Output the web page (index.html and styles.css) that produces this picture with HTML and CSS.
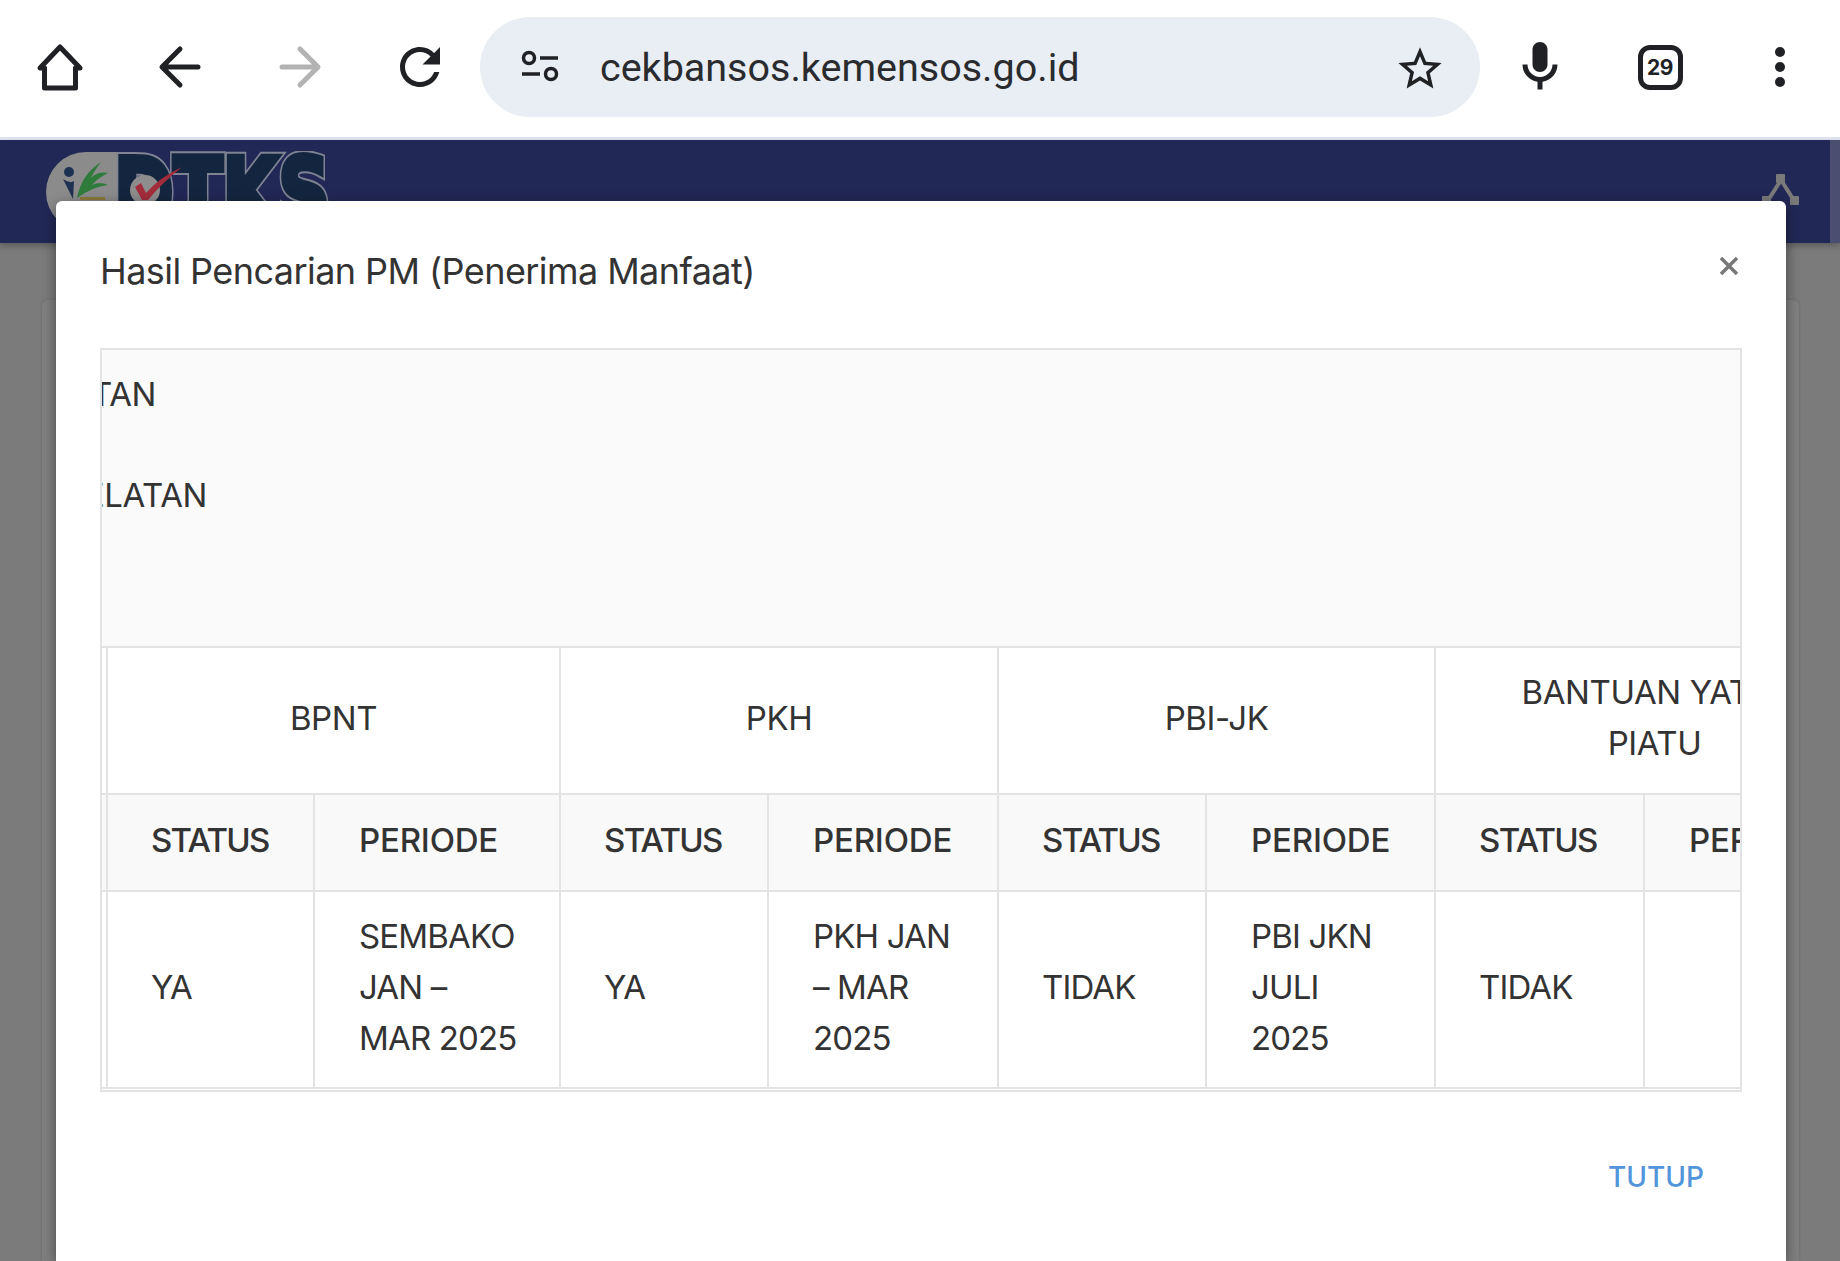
FILE: index.html
```html
<!DOCTYPE html>
<html lang="id">
<head>
<meta charset="utf-8">
<title>Cek Bansos</title>
<link rel="stylesheet" href="styles.css">
</head>
<body>
<header class="toolbar">
  <div class="tool-btn"><svg class="ico" viewBox="0 0 60 60"><path class="st5" d="M30 10 L10 31 H14.500 V51 H45.500 V31 H50 Z"/></svg></div>
  <div class="tool-btn"><svg class="ico" viewBox="0 0 60 60"><path class="st5" d="M48 30 H13 M30 12 L12 30 L30 48"/></svg></div>
  <div class="tool-btn"><svg class="ico" viewBox="0 0 60 60"><path class="st5 off" d="M12 30 H47 M30 12 L48 30 L30 48"/></svg></div>
  <div class="tool-btn"><svg class="ico" viewBox="0 0 24 24"><path class="fill" d="M17.65 6.350C16.200 4.900 14.210 4 12 4c-4.420 0-7.990 3.580-7.990 8s3.570 8 7.990 8c3.730 0 6.840-2.550 7.730-6h-2.080c-.820 2.330-3.040 4-5.650 4-3.310 0-6-2.690-6-6s2.690-6 6-6c1.660 0 3.140.690 4.220 1.780L13 11h7V4l-2.350 2.350z"/></svg></div>
  <div class="urlbar">
    <svg class="tune" viewBox="0 0 44 36"><g class="st35"><circle cx="9" cy="9" r="5.500"/><path d="M20 9H38M2 25H20"/><circle cx="31" cy="25" r="5.500"/></g></svg>
    <span class="url">cekbansos.kemensos.go.id</span>
    <svg class="star" viewBox="0 0 24 24"><path class="fill" d="M22 9.240l-7.190-.620L12 2 9.190 8.630 2 9.240l5.460 4.730L5.820 21 12 17.270 18.180 21l-1.630-7.030L22 9.240zM12 15.400l-3.760 2.270 1-4.280-3.320-2.880 4.380-.380L12 6.100l1.710 4.040 4.380.380-3.320 2.880 1 4.280L12 15.400z"/></svg>
  </div>
  <div class="tool-btn"><svg class="ico" viewBox="0 0 24 24"><path class="fill" d="M12 14c1.660 0 3-1.340 3-3V5c0-1.660-1.340-3-3-3S9 3.340 9 5v6c0 1.660 1.340 3 3 3zm5-3c0 2.760-2.240 5-5 5s-5-2.240-5-5H5c0 3.530 2.610 6.430 6 6.920V21h2v-3.080c3.390-.490 6-3.390 6-6.920h-2z"/></svg></div>
  <div class="tool-btn"><span class="tabs">29</span></div>
  <div class="tool-btn"><svg class="ico" viewBox="0 0 60 60"><circle class="fill" cx="30" cy="15" r="5"/><circle class="fill" cx="30" cy="30" r="5"/><circle class="fill" cx="30" cy="45" r="5"/></svg></div>
</header>

<div class="site-head">
  <svg class="logo" viewBox="0 0 300 90">
    <path class="logo-pill" d="M78 1H42A40 40 0 0 0 42 81H78Z"/>
    <circle class="logo-head" cx="25" cy="21" r="5"/>
    <path class="logo-body" d="M19 28 Q26 33 30 30 L29 48 Z"/>
    <path class="logo-leaf" d="M33 47 Q37 24 57 11 Q50 20 47 27 Q54 20 64 22 Q54 27 48 34 Q56 30 64 34 Q48 36 33 47 Z"/>
    <path class="logo-dots" d="M36 46h25v3H36z"/>
    <use class="logo-outline" href="#dtks"/>
    <text id="dtks" class="logo-text" x="70" y="76" textLength="216" lengthAdjust="spacingAndGlyphs">DTKS</text>
    <circle class="logo-ring" cx="101" cy="39" r="15"/>
    <path class="logo-tick" d="M91 36 L97 32 L102 42 Q116 26 138 16 Q118 32 104 49 L98 49 Z"/>
  </svg>
  <svg class="net" viewBox="0 0 40 40"><path class="net-line" d="M20 8 L6 30 M20 8 L34 30"/><rect class="net-node" x="15" y="2" width="9" height="9" rx="1"/><rect class="net-node" x="1" y="24" width="9" height="9" rx="1"/><rect class="net-node" x="29" y="24" width="9" height="9" rx="1"/></svg>
</div>

<main class="page-body"><div class="page-card"></div></main>

<section class="modal">
  <div class="modal-head">
    <h4 class="modal-title">Hasil Pencarian PM (Penerima Manfaat)</h4>
    <svg class="close" viewBox="0 0 20 20"><path d="M2 2 L18 18 M18 2 L2 18"/></svg>
  </div>
  <div class="scroller">
    <div class="details">
      <div class="line line-a"><span>TAN</span></div>
      <div class="line line-b"><span>ELATAN</span></div>
    </div>
    <table class="grid">
      <colgroup>
        <col class="c-lead"><col class="c-a"><col class="c-b"><col class="c-c"><col class="c-d"><col class="c-c"><col class="c-e"><col class="c-g"><col class="c-f">
      </colgroup>
      <thead>
        <tr class="head-top">
          <th></th>
          <th colspan="2">BPNT</th>
          <th colspan="2">PKH</th>
          <th colspan="2">PBI-JK</th>
          <th colspan="2">BANTUAN YATIM<br>PIATU</th>
        </tr>
        <tr class="head-sub">
          <th></th>
          <th class="status">STATUS</th><th>PERIODE</th>
          <th class="status">STATUS</th><th>PERIODE</th>
          <th class="status">STATUS</th><th>PERIODE</th>
          <th class="status">STATUS</th><th>PERIODE</th>
        </tr>
      </thead>
      <tbody>
        <tr>
          <td></td>
          <td>YA</td><td>SEMBAKO<br>JAN –<br>MAR 2025</td>
          <td>YA</td><td>PKH JAN<br>– MAR<br>2025</td>
          <td>TIDAK</td><td>PBI JKN<br>JULI<br>2025</td>
          <td>TIDAK</td><td></td>
        </tr>
      </tbody>
    </table>
  </div>
  <div class="modal-foot"><span class="btn-close">TUTUP</span></div>
</section>
</body>
</html>
```

FILE: styles.css
```css
* { box-sizing: border-box; }
html, body { margin: 0; height: 1261px; overflow: hidden; }
body {
  position: relative;
  display: flex;
  flex-direction: column;
  background: #7b7b7b;
  font-family: Inter, "Noto Sans", sans-serif;
  color: #333;
}

/* browser toolbar */
.toolbar {
  height: 140px;
  flex: none;
  display: flex;
  align-items: flex-start;
  background: #fff;
  border-bottom: 3px solid #dfe5f0;
}
.tool-btn {
  width: 120px;
  height: 134px;
  flex: none;
  display: flex;
  align-items: center;
  justify-content: center;
}
.ico { width: 60px; height: 60px; }
.fill { fill: #202124; }
.st5 { fill: none; stroke: #202124; stroke-width: 5; stroke-linecap: round; stroke-linejoin: round; }
.st5.off { stroke: #b3b3b3; }
.st35 { fill: none; stroke: #202124; stroke-width: 3.5; }
.urlbar {
  width: 1000px;
  height: 100px;
  margin-top: 17px;
  flex: none;
  display: flex;
  align-items: center;
  padding-left: 40px;
  background: #e9eef5;
  border-radius: 50px;
}
.tune { width: 44px; height: 36px; flex: none; }
.url {
  margin: 0 0 0 36px;
  font-family: Roboto, sans-serif;
  font-size: 39.500px;
  color: #2a2b2e;
  white-space: nowrap;
}
.star { width: 52px; height: 52px; margin-left: auto; margin-right: 34px; margin-top: 4px; }
.tabs {
  width: 45px;
  height: 45px;
  display: flex;
  align-items: center;
  justify-content: center;
  border: 5px solid #202124;
  border-radius: 12px;
  font-size: 21px;
  font-weight: 700;
  letter-spacing: -.5px;
  color: #202124;
}

/* site under the dialog, dimmed */
.site-head {
  position: relative;
  height: 103px;
  flex: none;
  background: #222856;
  box-shadow: 0 3px 6px rgba(0, 0, 0, .25);
  z-index: 1;
}
.site-head::after {
  content: "";
  position: absolute;
  top: 0;
  right: 0;
  bottom: 0;
  width: 10px;
  background: #4b4e70;
}
.logo { position: absolute; left: 44px; top: 11px; width: 300px; height: 90px; }
.logo-pill { fill: #8b8b8b; }
.logo-head { fill: #1d3152; }
.logo-body { fill: #1d3152; }
.logo-leaf { fill: #2f7b3c; }
.logo-dots { fill: #8c7a3a; }
.logo-text {
  font-family: "DejaVu Sans", sans-serif;
  font-weight: 700;
  font-size: 96px;
  fill: var(--logo-ink, #14263f);
  stroke: var(--logo-ink, #14263f);
  stroke-width: var(--logo-weight, 6);
}
.logo-outline {
  --logo-ink: #7f8393;
  --logo-weight: 10;
}
.logo-ring { fill: #8d8d8d; }
.logo-tick { fill: #a32c3c; }
.net { position: absolute; left: 1761px; top: 32px; width: 40px; height: 40px; }
.net-line { stroke: #7a7a7a; stroke-width: 4; fill: none; }
.net-node { fill: #7a7a7a; }

.page-body {
  flex: 1;
  padding: 57px 41px 0 42px;
  display: flex;
}
.page-card {
  flex: 1;
  background: #808080;
  border-radius: 6px 6px 0 0;
  box-shadow: 0 0 3px rgba(0, 0, 0, .15);
}

/* dialog */
.modal {
  position: absolute;
  left: 56px;
  top: 201px;
  width: 1730px;
  height: 1060px;
  display: flex;
  flex-direction: column;
  padding: 0 44px;
  background: #fff;
  border-radius: 6px 6px 0 0;
  box-shadow: 0 4px 14px rgba(0, 0, 0, .45);
  z-index: 2;
}
.modal-head {
  height: 147px;
  flex: none;
  display: flex;
  align-items: flex-start;
  justify-content: space-between;
}
.modal-title {
  margin: 46px 0 0;
  font-size: 36px;
  line-height: 48px;
  font-weight: 400;
  letter-spacing: -.57px;
  white-space: nowrap;
}
.close { width: 20px; height: 20px; margin: 55px 3px 0 0; flex: none; }
.close path { stroke: #777; stroke-width: 3.500; fill: none; }

.scroller {
  width: 1642px;
  height: 744px;
  flex: none;
  overflow: hidden;
  border: 2px solid #e3e3e3;
  font-size: 33px;
  line-height: 51px;
}
.details {
  height: 298px;
  padding-top: 19px;
  background: #fafafa;
  border-bottom: 2px solid #e3e3e3;
}
.line { display: flex; justify-content: flex-end; white-space: nowrap; height: 51px; margin-bottom: 50px; letter-spacing: -.4px; }
.line-a { width: 54px; }
.line-b { width: 105px; }

.grid {
  width: 1837px;
  margin-left: -67px;
  table-layout: fixed;
  border-collapse: collapse;
  background: #fff;
}
.c-lead { width: 71px; }
.c-a { width: 207px; }
.c-b { width: 246px; }
.c-c { width: 208px; }
.c-d { width: 230px; }
.c-e { width: 229px; }
.c-g { width: 209px; }
.c-f { width: 230px; }
.grid th, .grid td {
  border: 2px solid #e3e3e3;
  padding: 19px 44px 23px;
  font-weight: 400;
  text-align: left;
  vertical-align: middle;
  white-space: nowrap;
  letter-spacing: -.85px;
}
.grid thead tr:first-child th { border-top: 0; }
.head-top th { height: 146px; padding: 19px 44px 24px; text-align: center; letter-spacing: -.4px; }
.head-sub th { height: 97px; padding: 20px 44px 24px; background: #f9f9f9; font-weight: 500; letter-spacing: -.2px; }
.head-sub .status { padding-left: 43px; letter-spacing: -1.700px; }
.grid td:nth-child(even) { padding-left: 43px; }
.grid td { height: 195px; }

.modal-foot {
  flex: none;
  display: flex;
  justify-content: flex-end;
  padding: 65px 38px 0 0;
}
.btn-close { font-size: 28px; line-height: 40px; color: #5295da; font-weight: 500; }
```
